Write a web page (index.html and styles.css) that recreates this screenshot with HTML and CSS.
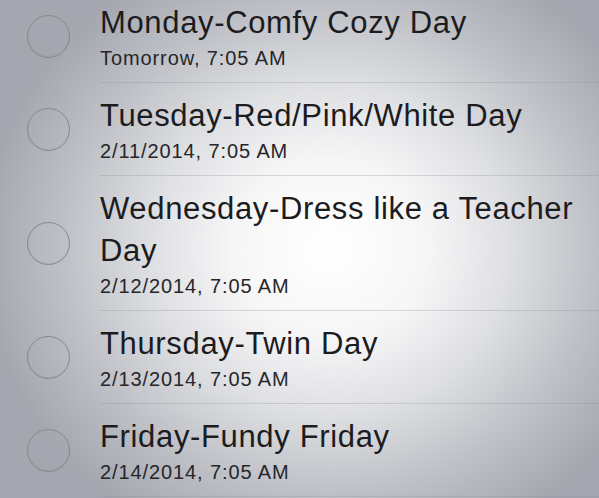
FILE: index.html
```html
<!DOCTYPE html>
<html>
<head>
<meta charset="utf-8">
<link rel="stylesheet" href="styles.css">
</head>
<body>
<div class="screen">
  <ul class="list">
    <li class="item">
      <span class="check"></span>
      <div class="body">
        <div class="title">Monday-Comfy Cozy Day</div>
        <div class="due">Tomorrow, 7:05 AM</div>
      </div>
    </li>
    <li class="item">
      <span class="check"></span>
      <div class="body">
        <div class="title">Tuesday-Red/Pink/White Day</div>
        <div class="due">2/11/2014, 7:05 AM</div>
      </div>
    </li>
    <li class="item">
      <span class="check"></span>
      <div class="body">
        <div class="title">Wednesday-Dress like a Teacher Day</div>
        <div class="due">2/12/2014, 7:05 AM</div>
      </div>
    </li>
    <li class="item">
      <span class="check"></span>
      <div class="body">
        <div class="title">Thursday-Twin Day</div>
        <div class="due">2/13/2014, 7:05 AM</div>
      </div>
    </li>
    <li class="item">
      <span class="check"></span>
      <div class="body">
        <div class="title">Friday-Fundy Friday</div>
        <div class="due">2/14/2014, 7:05 AM</div>
      </div>
    </li>
  </ul>
</div>
</body>
</html>
```
FILE: styles.css
```css
html, body {
  margin: 0;
  padding: 0;
  width: 599px;
  height: 498px;
  overflow: hidden;
}

.screen {
  width: 599px;
  height: 498px;
  overflow: hidden;
  background:
    radial-gradient(ellipse 58% 64% at 55% 50%,
      #ffffff 0%,
      #f6f6f7 28%,
      #dedfe2 52%,
      #bfc1c7 76%,
      #a4a7af 100%),
    #9a9ea7;
  font-family: "Liberation Sans", Arial, Helvetica, sans-serif;
  color: #1e1e20;
}

.list {
  list-style: none;
  margin: -10px 0 0 0;
  padding: 0;
}

.item {
  display: grid;
  grid-template-columns: 100px 1fr;
  align-items: center;
}

.check {
  width: 41px;
  height: 41px;
  margin-left: 27px;
  border-radius: 50%;
  border: 1px solid #86888e;
  box-shadow: inset 0 -1px 1px rgba(0, 0, 0, 0.06);
}

.body {
  align-self: stretch;
  padding: 12px 20px 12px 0;
  border-bottom: 1px solid rgba(140, 142, 150, 0.3);
}

.title {
  font-size: 31px;
  line-height: 42px;
  letter-spacing: 0.65px;
  color: #1c1c1e;
}

.due {
  margin-top: 2px;
  font-size: 20px;
  line-height: 24px;
  letter-spacing: 0.9px;
  color: #26262a;
}
```
